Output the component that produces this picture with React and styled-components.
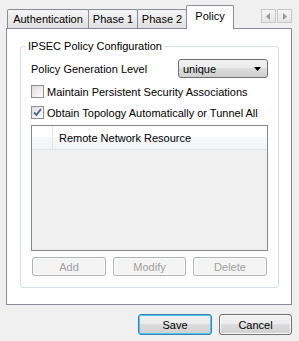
import React from "react";
import styled, { createGlobalStyle } from "styled-components";

const GlobalStyle = createGlobalStyle`
  html, body {
    margin: 0;
    padding: 0;
    background: #f0f0f0;
  }
  body {
    font-family: "Liberation Sans", Arial, sans-serif;
    font-size: 11px;
    color: #000;
  }
`;

const Dialog = styled.div`
  width: 299px;
  height: 341px;
  box-sizing: border-box;
  padding: 5px 7px 0 6px;
  background: #f0f0f0;
  display: flex;
  flex-direction: column;
`;

const TabStrip = styled.div`
  display: flex;
  align-items: flex-end;
  height: 23px;
  padding-left: 1px;
  position: relative;
  z-index: 1;
`;

const Tab = styled.div`
  box-sizing: border-box;
  width: ${(p) => p.w}px;
  height: ${(p) => (p.active ? 24 : 19)}px;
  margin-left: -1px;
  margin-bottom: ${(p) => (p.active ? -1 : 0)}px;
  border: 1px solid #898c95;
  border-bottom: none;
  border-radius: 2px 2px 0 0;
  background: ${(p) =>
    p.active ? "#ffffff" : "linear-gradient(#f5f5f5, #ebebeb 50%, #e0e0e0)"};
  display: flex;
  justify-content: center;
  padding-top: ${(p) => (p.active ? 4 : 3)}px;
  font-size: 11px;
  position: relative;
  z-index: ${(p) => (p.active ? 2 : 1)};

  &:first-child {
    margin-left: 0;
  }
`;

const Scroller = styled.div`
  margin-left: auto;
  align-self: flex-start;
  margin-top: 4px;
  display: flex;
`;

const ScrollButton = styled.div`
  width: 15px;
  height: 14px;
  box-sizing: border-box;
  border: 1px solid #c8c8c8;
  background: linear-gradient(#f6f6f6, #e4e4e4);
  display: flex;
  align-items: center;
  justify-content: center;
  margin-left: 1px;
`;

const Panel = styled.div`
  height: 277px;
  box-sizing: border-box;
  border: 1px solid #898c95;
  background: #ffffff;
  padding: 17px 12px 0 13px;
`;

const GroupBox = styled.div`
  position: relative;
  height: 242px;
  box-sizing: border-box;
  border: 1px solid #d5dfe5;
  border-radius: 3px;
  padding: 12px 10px 0 10px;
`;

const Legend = styled.span`
  position: absolute;
  top: -7px;
  left: 5px;
  background: #ffffff;
  padding: 0 2px;
`;

const Row = styled.div`
  display: flex;
  align-items: center;
  justify-content: space-between;
  height: 19px;
`;

const Select = styled.div`
  width: 90px;
  height: 19px;
  box-sizing: border-box;
  border: 1px solid #707070;
  border-radius: 3px;
  background: linear-gradient(#f2f2f2, #ebebeb 50%, #dddddd 50%, #cfcfcf);
  display: flex;
  align-items: center;
  justify-content: space-between;
  padding: 0 6px 0 4px;
`;

const CheckRow = styled.label`
  display: flex;
  align-items: center;
  height: 13px;
  margin-top: ${(p) => p.top}px;
  gap: 3px;
  white-space: nowrap;
`;

const Box = styled.span`
  width: 13px;
  height: 13px;
  box-sizing: border-box;
  border: 1px solid #8f8f8f;
  background: linear-gradient(135deg, #dcdcdc, #f4f4f4 70%, #ffffff);
  flex: none;
  display: flex;
  align-items: center;
  justify-content: center;
`;

const ListBox = styled.div`
  margin-top: 6px;
  height: 126px;
  box-sizing: border-box;
  border: 1px solid #828790;
  background: #f0f0f0;
`;

const ListHeader = styled.div`
  display: flex;
  height: 23px;
  border-bottom: 1px solid #e5e5e5;
  background: linear-gradient(#ffffff, #ffffff 50%, #f7f8fa 50%, #f3f4f6);
`;

const HeaderCell = styled.div`
  width: ${(p) => (p.w ? `${p.w}px` : "auto")};
  flex: ${(p) => (p.w ? "none" : "1")};
  border-right: ${(p) => (p.w ? "1px solid #e5e5e5" : "none")};
  display: flex;
  align-items: center;
  padding-left: ${(p) => (p.w ? 0 : 6)}px;
`;

const ButtonRow = styled.div`
  display: flex;
  justify-content: space-between;
  margin-top: 6px;
  padding: 0 1px;
`;

const Button = styled.div`
  width: ${(p) => p.w || 74}px;
  height: ${(p) => p.h || 19}px;
  box-sizing: border-box;
  border: 1px solid ${(p) => (p.disabled ? "#adb2b5" : p.primary ? "#3c7fb1" : "#707070")};
  border-radius: 3px;
  background: ${(p) =>
    p.disabled
      ? "#f4f4f4"
      : "linear-gradient(#f2f2f2, #ebebeb 50%, #dddddd 50%, #cfcfcf)"};
  box-shadow: ${(p) => (p.primary ? "inset 0 0 0 1px #48c8f7" : "inset 0 0 0 1px #fcfcfc")};
  color: ${(p) => (p.disabled ? "#a0a0a0" : "#000")};
  display: flex;
  align-items: center;
  justify-content: center;
`;

const Footer = styled.div`
  display: flex;
  justify-content: flex-end;
  gap: 7px;
  margin-top: 9px;
`;

const Arrow = ({ dir }) => (
  <svg width="5" height="7" viewBox="0 0 5 7">
    <path d={dir === "left" ? "M4 0 L0 3.5 L4 7 Z" : "M1 0 L5 3.5 L1 7 Z"} fill="#9a9a9a" />
  </svg>
);

const Check = () => (
  <svg width="9" height="9" viewBox="0 0 9 9">
    <path d="M1 4.5 L3.5 7 L8 1" fill="none" stroke="#4a5f97" strokeWidth="1.8" />
  </svg>
);

const tabs = [
  { label: "Authentication", w: 82 },
  { label: "Phase 1", w: 50 },
  { label: "Phase 2", w: 50 },
  { label: "Policy", w: 48, active: true },
];

export default function App() {
  return (
    <>
      <GlobalStyle />
      <Dialog>
        <TabStrip>
          {tabs.map((t) => (
            <Tab key={t.label} w={t.w} active={t.active}>
              {t.label}
            </Tab>
          ))}
          <Scroller>
            <ScrollButton>
              <Arrow dir="left" />
            </ScrollButton>
            <ScrollButton>
              <Arrow dir="right" />
            </ScrollButton>
          </Scroller>
        </TabStrip>
        <Panel>
          <GroupBox>
            <Legend>IPSEC Policy Configuration</Legend>
            <Row>
              <span>Policy Generation Level</span>
              <Select>
                <span>unique</span>
                <svg width="7" height="4" viewBox="0 0 7 4">
                  <path d="M0 0 H7 L3.5 4 Z" fill="#000" />
                </svg>
              </Select>
            </Row>
            <CheckRow top={7}>
              <Box />
              Maintain Persistent Security Associations
            </CheckRow>
            <CheckRow top={8}>
              <Box>
                <Check />
              </Box>
              Obtain Topology Automatically or Tunnel All
            </CheckRow>
            <ListBox>
              <ListHeader>
                <HeaderCell w={20} />
                <HeaderCell>Remote Network Resource</HeaderCell>
              </ListHeader>
            </ListBox>
            <ButtonRow>
              <Button disabled>Add</Button>
              <Button disabled w={73}>Modify</Button>
              <Button disabled>Delete</Button>
            </ButtonRow>
          </GroupBox>
        </Panel>
        <Footer>
          <Button primary h={21}>Save</Button>
          <Button h={21} w={73}>Cancel</Button>
        </Footer>
      </Dialog>
    </>
  );
}
